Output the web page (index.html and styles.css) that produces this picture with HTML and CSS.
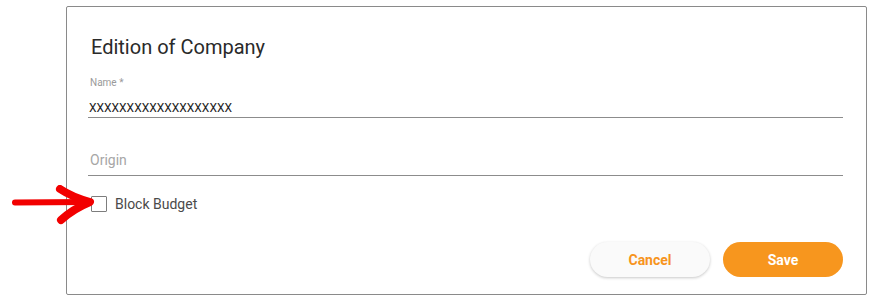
FILE: index.html
```html
<!DOCTYPE html>
<html lang="en">
<head>
    <meta charset="UTF-8">
    <title>Edition of Company</title>
    <link rel="stylesheet" href="styles.css">
</head>
<body>
<div class="page">
    <div class="dialog">
        <h2 class="dialog__title">Edition of Company</h2>

        <div class="field">
            <label class="field__label">Name *</label>
            <div class="field__input">XXXXXXXXXXXXXXXXXXX</div>
        </div>

        <div class="field field--empty">
            <div class="field__input field__input--placeholder">Origin</div>
        </div>

        <label class="check">
            <span class="check__box"></span>
            <span class="check__text">Block Budget</span>
        </label>

        <div class="dialog__actions">
            <button class="btn btn--light">Cancel</button>
            <button class="btn btn--primary">Save</button>
        </div>
    </div>

    <!-- red annotation arrow -->
    <svg class="arrow" width="100" height="40" viewBox="0 0 100 40">
        <path d="M15 17.5 L86 17" stroke="#f20000" stroke-width="6" stroke-linecap="round" fill="none"/>
        <path d="M60 4 Q72 12 90 17 Q73 24 61 35" stroke="#f20000" stroke-width="8" stroke-linecap="round" stroke-linejoin="round" fill="none"/>
    </svg>
</div>
</body>
</html>
```

FILE: styles.css
```css
html, body {
    margin: 0;
    background: #fff;
}

.page {
    position: relative;
    padding: 6px 0 0 66px;
    font-family: Roboto, "Liberation Sans", sans-serif;
}

.dialog {
    box-sizing: border-box;
    width: 801px;
    height: 289px;
    border: 1px solid #8a8a8a;
    border-radius: 2px;
    padding: 28px 23px 17px 21px;
    display: flex;
    flex-direction: column;
}

.dialog__title {
    margin: 0;
    padding-left: 3px;
    font-size: 20px;
    line-height: 24px;
    font-weight: 400;
    color: #2a2a2a;
}

.field {
    margin-top: 18px;
    display: flex;
    flex-direction: column;
}

.field__label {
    padding-left: 2px;
    font-size: 10px;
    line-height: 12px;
    color: #9a9a9a;
    margin-bottom: 11px;
}

.field__input {
    padding: 0 0 1px 1px;
    font-size: 12px;
    line-height: 16px;
    color: #222;
    border-bottom: 1px solid #8c8c8c;
}

.field--empty {
    margin-top: 33px;
}

.field__input--placeholder {
    padding: 0 0 6px 2px;
    font-size: 14px;
    line-height: 18px;
    color: #a6a6a6;
}

.check {
    margin-top: 20px;
    margin-left: 3px;
    display: flex;
    align-items: center;
    gap: 8px;
}

.check__box {
    box-sizing: border-box;
    width: 16px;
    height: 16px;
    border: 1px solid #7d7d7d;
    border-radius: 1px;
}

.check__text {
    font-size: 14px;
    line-height: 16px;
    color: #4a4a4a;
}

.dialog__actions {
    margin-top: auto;
    display: flex;
    justify-content: flex-end;
    gap: 13px;
}

.btn {
    width: 120px;
    height: 35px;
    border: none;
    border-radius: 18px;
    font-family: Roboto, "Liberation Sans", sans-serif;
    font-size: 14px;
    font-weight: 700;
    cursor: pointer;
}

.btn--light {
    background: #fafafa;
    color: #f7941d;
    box-shadow: 0 1px 3px rgba(0, 0, 0, 0.22);
}

.btn--primary {
    background: #f7961e;
    color: #fff;
}

.arrow {
    position: absolute;
    left: 0;
    top: 185px;
}
```
